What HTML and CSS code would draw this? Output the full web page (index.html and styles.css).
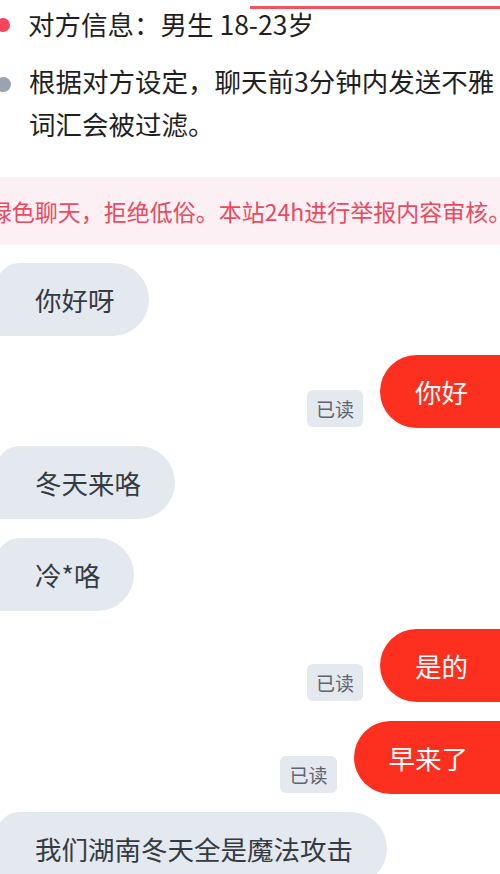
FILE: index.html
```html
<!DOCTYPE html>
<html lang="zh-CN">
<head>
<meta charset="utf-8">
<title>聊天</title>
<link rel="stylesheet" href="styles.css">
</head>
<body>
<div class="page">
  <div class="top-line"></div>
  <ul class="info">
    <li class="info-item">
      <span class="dot dot-red"></span>
      <span class="info-text">对方信息：男生 18-23岁</span>
    </li>
    <li class="info-item">
      <span class="dot dot-grey"></span>
      <span class="info-text">根据对方设定，聊天前3分钟内发送不雅<br>词汇会被过滤。</span>
    </li>
  </ul>
  <div class="notice"><span class="notice-text">绿色聊天，拒绝低俗。本站24h进行举报内容审核。</span></div>
  <div class="chat">
    <div class="row row-left"><div class="bubble bubble-in">你好呀</div></div>
    <div class="row row-right"><span class="read">已读</span><div class="bubble bubble-out">你好</div></div>
    <div class="row row-left"><div class="bubble bubble-in">冬天来咯</div></div>
    <div class="row row-left"><div class="bubble bubble-in">冷*咯</div></div>
    <div class="row row-right"><span class="read">已读</span><div class="bubble bubble-out">是的</div></div>
    <div class="row row-right"><span class="read">已读</span><div class="bubble bubble-out">早来了</div></div>
    <div class="row row-left"><div class="bubble bubble-in">我们湖南冬天全是魔法攻击</div></div>
  </div>
</div>
</body>
</html>
```

FILE: styles.css
```css
html, body {
  margin: 0;
  padding: 0;
  background: #ffffff;
}
body {
  width: 500px;
  height: 874px;
  overflow: hidden;
  font-family: "Noto Sans CJK SC", "Noto Sans", sans-serif;
}
.page {
  position: relative;
  padding-top: 2px;
}
.top-line {
  position: absolute;
  left: 250px;
  right: 0;
  top: 6px;
  height: 3px;
  background: #f2525f;
}
.info {
  list-style: none;
  margin: 0;
  padding: 0;
  display: flex;
  flex-direction: column;
  gap: 14px;
}
.info-item {
  display: flex;
  align-items: flex-start;
  gap: 18px;
  margin-left: -4px;
}
.dot {
  flex: none;
  border-radius: 50%;
}
.dot-red {
  width: 14px;
  height: 14px;
  margin-top: 16px;
  background: #f7465b;
}
.dot-grey {
  width: 15px;
  height: 15px;
  margin-top: 18px;
  background: #9aa3b0;
}
.info-text {
  font-size: 26.5px;
  line-height: 43px;
  color: #1f1f1f;
  white-space: nowrap;
}
.notice {
  margin-top: 32px;
  height: 68px;
  background: #fdf0f5;
  display: flex;
  align-items: center;
  justify-content: center;
  overflow: hidden;
}
.notice-text {
  flex: none;
  font-size: 23px;
  color: #ea4a5e;
  white-space: nowrap;
}
.chat {
  margin-top: 18px;
  display: flex;
  flex-direction: column;
  gap: 18.5px;
}
.row {
  display: flex;
  align-items: flex-end;
}
.row-left {
  justify-content: flex-start;
}
.row-right {
  justify-content: flex-end;
  gap: 17px;
}
.bubble {
  height: 73px;
  line-height: 73px;
  font-size: 26.5px;
  white-space: nowrap;
  box-sizing: border-box;
}
.bubble-in {
  margin-left: -4px;
  padding: 0 34px 0 39px;
  background: #e4e8ef;
  color: #353b42;
  border-radius: 24px 37px 37px 0;
}
.bubble-out {
  margin-right: -3px;
  padding: 0 35px 0 35px;
  background: #fd2f1f;
  color: #ffffff;
  border-radius: 37px 0 0 37px;
}
.read {
  height: 37px;
  line-height: 37px;
  padding: 0 9px;
  margin-bottom: 1px;
  font-size: 19px;
  color: #5c6570;
  background: #e4e8ef;
  border-radius: 6px;
}
```
